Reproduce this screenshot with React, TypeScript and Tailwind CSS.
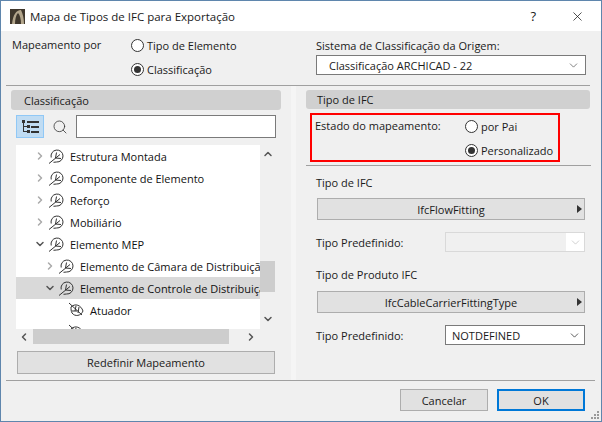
import { ChevronDown, ChevronRight, ChevronUp, ChevronLeft, Search, X } from "lucide-react";

function BranchIcon() {
    return (
        <svg width="16" height="16" viewBox="0 0 16 16" fill="none" stroke="#333" strokeWidth="1" className="shrink-0">
            <path d="M3.2 9.5 A6 6 0 1 1 8.5 14 L5.5 14.3" />
            <path d="M1 15.5 L12 6.5 M8.5 4.5 L7.5 10 M7.5 10 L13 10.5" />
        </svg>
    );
}

function LeafIcon() {
    return (
        <svg width="16" height="16" viewBox="0 0 16 16" fill="none" stroke="#333" strokeWidth="1" className="shrink-0">
            <path d="M3 5 C7 1 13 3 15 9 C13 14 7 15 4 11 C3 9 3 7 3 5 Z" />
            <path d="M1 1 L14 13 M8 4 L7 9 M11 5 L10 11 M4 9 L9 9" />
        </svg>
    );
}

function TreeRow({ label, indent, open, selected, icon = "branch" }: { label: string; indent: number; open?: boolean; selected?: boolean; icon?: "branch" | "leaf" }) {
    return (
        <div className={`flex h-[22px] shrink-0 items-center ${selected ? "bg-[#d9d9d9]" : ""}`}>
            <div className={`flex items-center ${indent === 0 ? "pl-[15px]" : indent === 1 ? "pl-[25px]" : "pl-[52px]"}`}>
                {icon === "branch" && (
                    <span className="flex w-[17px] shrink-0 justify-center">
                        {open ? (
                            <ChevronDown size={12} strokeWidth={3} className="text-[#555]" />
                        ) : (
                            <ChevronRight size={12} strokeWidth={3} className="text-[#aaa]" />
                        )}
                    </span>
                )}
                {icon === "leaf" ? <LeafIcon /> : <BranchIcon />}
                <span className="ml-[6px] whitespace-nowrap text-[#111]">{label}</span>
            </div>
        </div>
    );
}

function RadioOption({ label, checked }: { label: string; checked?: boolean }) {
    return (
        <div className="flex items-center gap-[3px]">
            <span className="flex h-[13px] w-[13px] items-center justify-center rounded-full border border-[#333] bg-white">
                {checked && <span className="h-[7px] w-[7px] rounded-full bg-[#333]" />}
            </span>
            <span>{label}</span>
        </div>
    );
}

function ArrowButton({ label }: { label: string }) {
    return (
        <div className="relative ml-[1px] flex h-[22px] w-[268px] items-center justify-center border border-[#adadad] bg-[#e1e1e1]">
            {label}
            <span className="absolute right-[2px] h-0 w-0 border-y-[4px] border-l-[5px] border-y-transparent border-l-[#333]" />
        </div>
    );
}

export default function App() {
    return (
        <div className="flex h-[422px] w-[602px] flex-col overflow-hidden border border-t-0 border-[#5f86ad] bg-[#f0f0f0] text-[11px] leading-[15px] text-[#1a1a1a] [font-family:'Open_Sans',sans-serif]">
            <div className="flex h-[31px] shrink-0 items-center border-t border-[#5f86ad] bg-white pl-[9px] text-[11.5px]">
                <svg width="15" height="15" viewBox="0 0 15 15" className="shrink-0">
                    <rect width="15" height="15" fill="#3f372c" />
                    <path d="M2 15 C3 6 6 1 11 1 C13 5 14 10 14 15 L11 15 C11 10 10 6 8 4 C6 6 5 10 5 15 Z" fill="#b3a68c" />
                </svg>
                <span className="ml-[5px]">Mapa de Tipos de IFC para Exportação</span>
                <span className="ml-auto mr-[34px] text-[13px]">?</span>
                <X size={15} strokeWidth={1.2} className="mr-[16px]" />
            </div>

            <div className="flex h-[54px] shrink-0">
                <div className="flex w-[299px] pl-[11px] pt-[6px]">
                    <span className="w-[119px]">Mapeamento por</span>
                    <div className="flex flex-col gap-[9px] pt-[1px]">
                        <RadioOption label="Tipo de Elemento" />
                        <RadioOption label="Classificação" checked />
                    </div>
                </div>
                <div className="pl-[16px] pt-[7px]">
                    <div>Sistema de Classificação da Origem:</div>
                    <div className="mt-[2px] flex h-[20px] w-[270px] items-center justify-between border border-[#7a7a7a] bg-white pl-[12px] pr-[5px]">
                        Classificação ARCHICAD - 22
                        <ChevronDown size={13} strokeWidth={1} />
                    </div>
                </div>
            </div>

            <div className="ml-[5px] mr-[11px] h-px shrink-0 bg-[#a0a0a0]" />

            <div className="flex min-h-0 flex-1">
                <div className="w-[290px] shrink-0 pl-[10px] pt-[4px]">
                    <div className="flex h-[20px] w-[270px] items-center rounded-[3px] bg-[#d0d0d0] pl-[13px]">Classificação</div>
                    <div className="ml-[5px] mt-[5px] flex w-[260px] items-center">
                        <div className="flex h-[23px] w-[28px] items-center justify-center border border-[#90c8f6] bg-[#c0dcf3]">
                            <svg width="17" height="13" viewBox="0 0 17 13" fill="#333">
                                <rect x="0" y="0" width="3" height="3" />
                                <rect x="5" y="1" width="12" height="2" />
                                <rect x="5" y="5" width="3" height="3" />
                                <rect x="9" y="6" width="8" height="2" />
                                <rect x="5" y="10" width="3" height="3" />
                                <rect x="9" y="11" width="8" height="2" />
                                <rect x="1" y="3" width="1" height="9" />
                                <rect x="1" y="6" width="4" height="1" />
                                <rect x="1" y="11" width="4" height="1" />
                            </svg>
                        </div>
                        <Search size={16} strokeWidth={1.2} className="ml-[8px] text-[#333]" />
                        <div className="ml-[8px] h-[23px] w-[200px] border border-[#7a7a7a] bg-white" />
                    </div>
                    <div className="ml-[5px] mt-[7px] flex h-[184px] w-[260px]">
                        <div className="flex w-[244px] flex-col overflow-hidden bg-white">
                            <TreeRow label="Estrutura Montada" indent={0} />
                            <TreeRow label="Componente de Elemento" indent={0} />
                            <TreeRow label="Reforço" indent={0} />
                            <TreeRow label="Mobiliário" indent={0} />
                            <TreeRow label="Elemento MEP" indent={0} open />
                            <TreeRow label="Elemento de Câmara de Distribuição" indent={1} />
                            <TreeRow label="Elemento de Controle de Distribuição" indent={1} open selected />
                            <TreeRow label="Atuador" indent={2} icon="leaf" />
                            <TreeRow label="Alarme" indent={2} icon="leaf" />
                        </div>
                        <div className="relative flex w-[15px] flex-col items-center justify-between py-[3px]">
                            <ChevronUp size={12} strokeWidth={3} className="text-[#555]" />
                            <div className="absolute left-0 top-[116px] h-[31px] w-[15px] bg-[#cdcdcd]" />
                            <ChevronDown size={12} strokeWidth={3} className="mb-[1px] text-[#555]" />
                        </div>
                    </div>
                    <div className="ml-[5px] flex h-[15px] w-[259px] items-center">
                        <ChevronLeft size={12} strokeWidth={3} className="ml-[2px] text-[#555]" />
                        <div className="ml-[3px] h-[15px] w-[196px] bg-[#cdcdcd]" />
                        <ChevronRight size={12} strokeWidth={3} className="ml-[16px] text-[#555]" />
                    </div>
                    <div className="ml-[6px] mt-[7px] flex h-[23px] w-[258px] items-center justify-center border border-[#adadad] bg-[#e1e1e1]">
                        Redefinir Mapeamento
                    </div>
                </div>

                <div className="w-[5px] shrink-0 bg-[#f5f5f5]" />

                <div className="w-[285px] shrink-0 pl-[10px] pt-[4px]">
                    <div className="flex h-[19px] w-[284px] items-center rounded-[3px] bg-[#d0d0d0] pl-[11px]">Tipo de IFC</div>
                    <div className="ml-[4px] mt-[4px] flex h-[49px] w-[250px] border-2 border-[#f00] pl-[3px] pt-[3px]">
                        <span className="w-[150px]">Estado do mapeamento:</span>
                        <div className="flex flex-col gap-[9px] pt-[1px]">
                            <RadioOption label="por Pai" />
                            <RadioOption label="Personalizado" checked />
                        </div>
                    </div>
                    <div className="mt-[3px] h-px w-[285px] bg-[#a0a0a0]" />
                    <div className="pl-[10px]">
                        <div className="mt-[9px]">Tipo de IFC</div>
                        <div className="mt-[8px]"><ArrowButton label="IfcFlowFitting" /></div>
                        <div className="mt-[12px] flex items-center">
                            <span className="w-[129px] shrink-0">Tipo Predefinido:</span>
                            <div className="flex h-[20px] w-[140px] shrink-0 justify-end border border-[#d9d9d9] bg-white">
                                <div className="flex h-full w-full items-center justify-end bg-[#f0f0f0]">
                                    <div className="flex h-full w-[18px] items-center justify-center bg-white">
                                        <ChevronDown size={13} strokeWidth={1} className="text-[#aaa]" />
                                    </div>
                                </div>
                            </div>
                        </div>
                        <div className="mt-[15px]">Tipo de Produto IFC</div>
                        <div className="mt-[9px]"><ArrowButton label="IfcCableCarrierFittingType" /></div>
                        <div className="mt-[12px] flex items-center">
                            <span className="w-[129px] shrink-0">Tipo Predefinido:</span>
                            <div className="flex h-[20px] w-[140px] shrink-0 items-center justify-between border border-[#7a7a7a] bg-white pl-[6px] pr-[3px]">
                                NOTDEFINED
                                <ChevronDown size={13} strokeWidth={1.3} />
                            </div>
                        </div>
                    </div>
                </div>
            </div>

            <div className="ml-[5px] mr-[6px] h-px shrink-0 bg-[#a0a0a0]" />

            <div className="relative flex h-[40px] shrink-0 justify-end gap-[9px] pr-[16px] pt-[8px]">
                <div className="flex h-[22px] w-[88px] items-center justify-center border border-[#adadad] bg-[#e1e1e1]">Cancelar</div>
                <div className="flex h-[22px] w-[88px] items-center justify-center border-2 border-[#0078d7] bg-[#e1e1e1]">OK</div>
                <svg width="10" height="10" viewBox="0 0 10 10" fill="#9a9a9a" className="absolute bottom-[1px] right-[1px]">
                    <rect x="7" y="1" width="2" height="2" />
                    <rect x="4" y="4" width="2" height="2" />
                    <rect x="7" y="4" width="2" height="2" />
                    <rect x="1" y="7" width="2" height="2" />
                    <rect x="4" y="7" width="2" height="2" />
                    <rect x="7" y="7" width="2" height="2" />
                </svg>
            </div>
        </div>
    );
}
